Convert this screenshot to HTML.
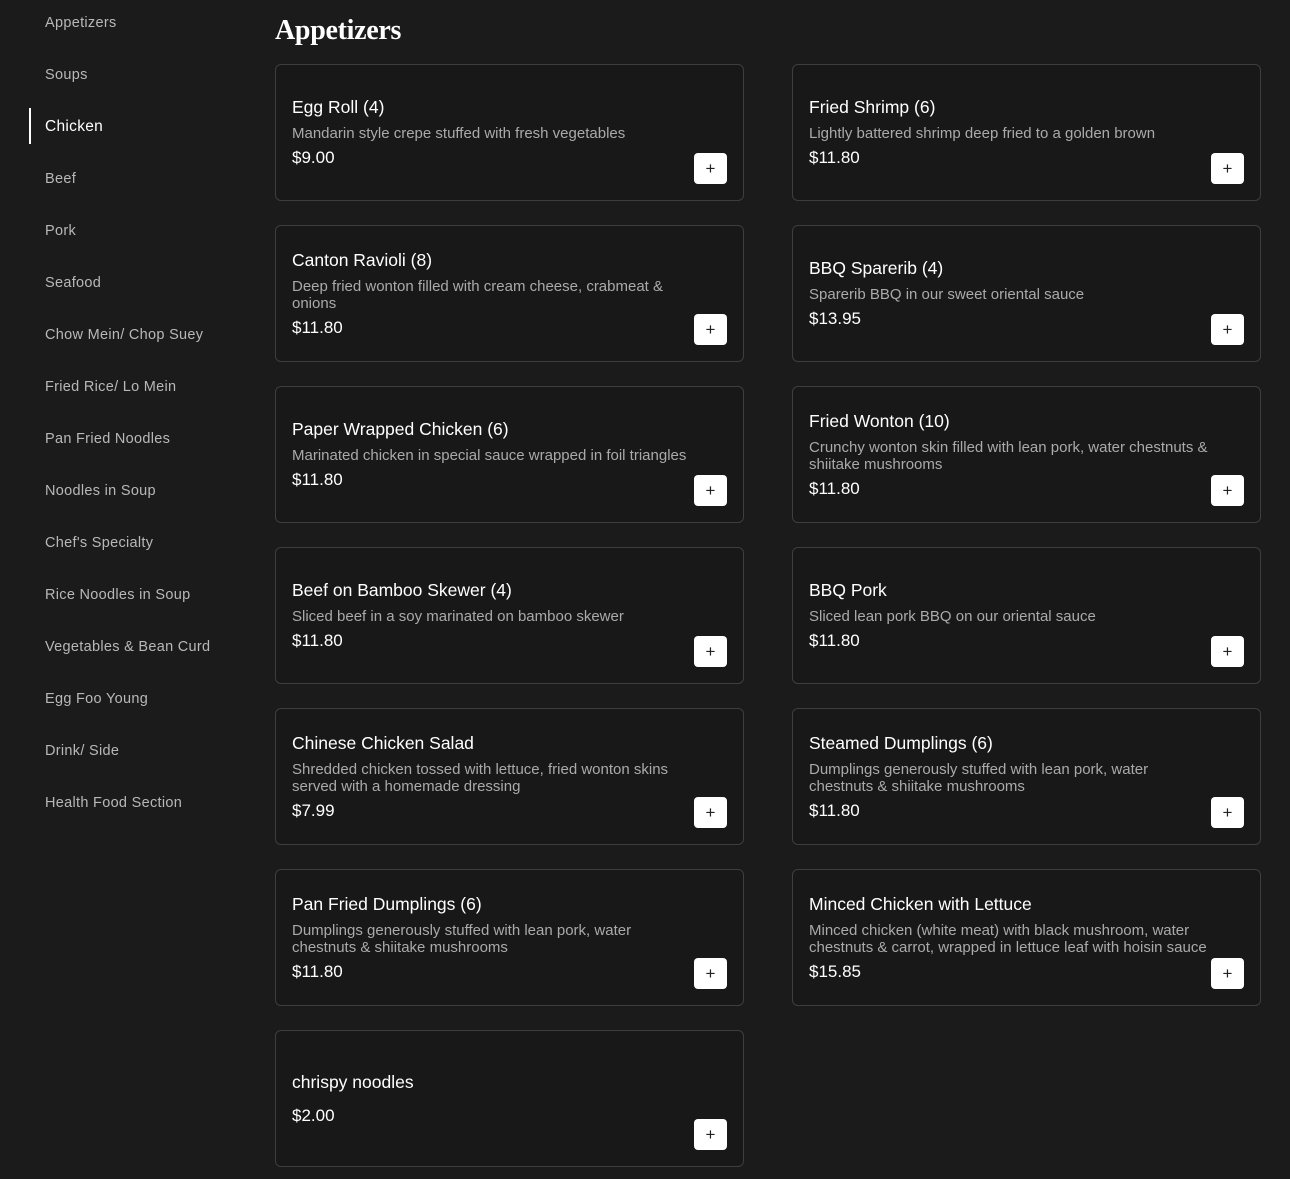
<!DOCTYPE html>
<html><head><meta charset="utf-8"><style>
*{margin:0;padding:0;box-sizing:border-box}
body{width:1290px;height:1179px;background:#1b1b1b;font-family:"Liberation Sans",sans-serif;position:relative;overflow:hidden;color:#fff}
.nav{position:absolute;left:45px;font-size:14.5px;color:#b8b8b8;transform:translateY(-50%);letter-spacing:.3px;margin-top:1px}
.nav.act{color:#fff;font-size:15.5px}
.bar{position:absolute;left:29px;top:108px;width:2px;height:36px;background:#fff}
h1{position:absolute;left:275px;top:15px;font-family:"Liberation Serif",serif;font-weight:bold;font-size:28px;color:#fff;letter-spacing:-.3px}
.card{position:absolute;width:469px;height:137px;border:1px solid #3e3e3e;border-radius:6px;background:#181818;display:flex;flex-direction:column;justify-content:center;padding:0 16px}
.t{font-size:17.5px;line-height:22px;color:#fff}
.d{font-size:15px;line-height:17px;color:#aaa;margin-top:7px}
.p{font-size:17px;line-height:22px;color:#fff;margin-top:5px}
.np{margin-top:12px}
.b{position:absolute;right:16px;top:88px;width:33px;height:31px;background:#fff;border-radius:4px;color:#222;font-size:17px;line-height:31px;text-align:center}
</style></head><body>
<div class="nav" style="top:22px">Appetizers</div>
<div class="nav" style="top:74px">Soups</div>
<div class="bar"></div>
<div class="nav act" style="top:126px">Chicken</div>
<div class="nav" style="top:178px">Beef</div>
<div class="nav" style="top:230px">Pork</div>
<div class="nav" style="top:282px">Seafood</div>
<div class="nav" style="top:334px">Chow Mein/ Chop Suey</div>
<div class="nav" style="top:386px">Fried Rice/ Lo Mein</div>
<div class="nav" style="top:438px">Pan Fried Noodles</div>
<div class="nav" style="top:490px">Noodles in Soup</div>
<div class="nav" style="top:542px">Chef's Specialty</div>
<div class="nav" style="top:594px">Rice Noodles in Soup</div>
<div class="nav" style="top:646px">Vegetables &amp; Bean Curd</div>
<div class="nav" style="top:698px">Egg Foo Young</div>
<div class="nav" style="top:750px">Drink/ Side</div>
<div class="nav" style="top:802px">Health Food Section</div>

<h1>Appetizers</h1>

<div class="card" style="left:275px;top:64px"><div class="t">Egg Roll (4)</div><div class="d">Mandarin style crepe stuffed with fresh vegetables</div><div class="p">$9.00</div><div class="b">+</div></div>
<div class="card" style="left:792px;top:64px"><div class="t">Fried Shrimp (6)</div><div class="d">Lightly battered shrimp deep fried to a golden brown</div><div class="p">$11.80</div><div class="b">+</div></div>

<div class="card" style="left:275px;top:225px"><div class="t">Canton Ravioli (8)</div><div class="d">Deep fried wonton filled with cream cheese, crabmeat &amp;<br>onions</div><div class="p">$11.80</div><div class="b">+</div></div>
<div class="card" style="left:792px;top:225px"><div class="t">BBQ Sparerib (4)</div><div class="d">Sparerib BBQ in our sweet oriental sauce</div><div class="p">$13.95</div><div class="b">+</div></div>

<div class="card" style="left:275px;top:386px"><div class="t">Paper Wrapped Chicken (6)</div><div class="d">Marinated chicken in special sauce wrapped in foil triangles</div><div class="p">$11.80</div><div class="b">+</div></div>
<div class="card" style="left:792px;top:386px"><div class="t">Fried Wonton (10)</div><div class="d">Crunchy wonton skin filled with lean pork, water chestnuts &amp;<br>shiitake mushrooms</div><div class="p">$11.80</div><div class="b">+</div></div>

<div class="card" style="left:275px;top:547px"><div class="t">Beef on Bamboo Skewer (4)</div><div class="d">Sliced beef in a soy marinated on bamboo skewer</div><div class="p">$11.80</div><div class="b">+</div></div>
<div class="card" style="left:792px;top:547px"><div class="t">BBQ Pork</div><div class="d">Sliced lean pork BBQ on our oriental sauce</div><div class="p">$11.80</div><div class="b">+</div></div>

<div class="card" style="left:275px;top:708px"><div class="t">Chinese Chicken Salad</div><div class="d">Shredded chicken tossed with lettuce, fried wonton skins<br>served with a homemade dressing</div><div class="p">$7.99</div><div class="b">+</div></div>
<div class="card" style="left:792px;top:708px"><div class="t">Steamed Dumplings (6)</div><div class="d">Dumplings generously stuffed with lean pork, water<br>chestnuts &amp; shiitake mushrooms</div><div class="p">$11.80</div><div class="b">+</div></div>

<div class="card" style="left:275px;top:869px"><div class="t">Pan Fried Dumplings (6)</div><div class="d">Dumplings generously stuffed with lean pork, water<br>chestnuts &amp; shiitake mushrooms</div><div class="p">$11.80</div><div class="b">+</div></div>
<div class="card" style="left:792px;top:869px"><div class="t">Minced Chicken with Lettuce</div><div class="d">Minced chicken (white meat) with black mushroom, water<br>chestnuts &amp; carrot, wrapped in lettuce leaf with hoisin sauce</div><div class="p">$15.85</div><div class="b">+</div></div>

<div class="card" style="left:275px;top:1030px"><div class="t">chrispy noodles</div><div class="p np">$2.00</div><div class="b">+</div></div>
</body></html>
